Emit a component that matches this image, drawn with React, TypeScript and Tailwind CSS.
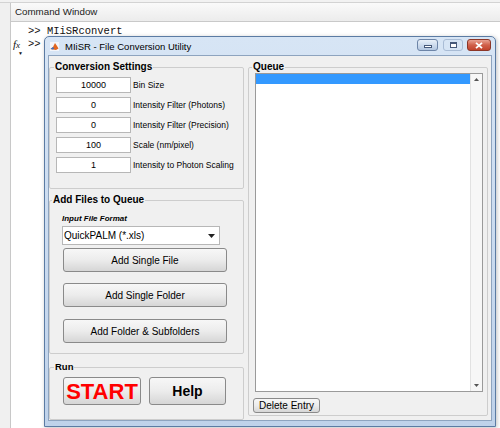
import React from 'react';

const settings = [
  { value: '10000', label: 'Bin Size' },
  { value: '0', label: 'Intensity Filter (Photons)' },
  { value: '0', label: 'Intensity Filter (Precision)' },
  { value: '100', label: 'Scale (nm/pixel)' },
  { value: '1', label: 'Intensity to Photon Scaling' },
];

const EditRow = ({ value, label }: { value: string; label: string }) => (
  <div className="flex items-center h-[16px]">
    <div className="w-[75px] h-[16px] bg-white border border-[#b7b7b7] flex items-center justify-center text-[9px] leading-none">
      {value}
    </div>
    <span className="ml-[2px] text-[8.5px] leading-none">{label}</span>
  </div>
);

const WinButton = ({ children, className = '' }: { children: React.ReactNode; className?: string }) => (
  <div
    className={`flex items-center justify-center border border-[#8a8a8a] rounded-[3px] bg-linear-to-b from-[#f7f7f7] via-[#ececec] to-[#d6d6d6] ${className}`}
  >
    {children}
  </div>
);

const MatlabIcon = () => (
  <svg width="9" height="9" viewBox="0 0 9 9">
    <rect width="9" height="9" fill="#f3f5fa" />
    <path d="M0.5 7 L3 5 L5 1 L7 4 L8.5 6.5 L6 8 L3 7.6 Z" fill="#e2661f" />
    <path d="M0.5 7 L3 5 L4.3 6.6 L3 7.6 Z" fill="#3b6fc2" />
  </svg>
);

const Dialog = () => (
  <div className="absolute left-[44px] top-[36px] w-[452px] h-[391px] flex flex-col rounded-t-[5px] border border-[#5b7ba3] bg-linear-to-b from-[#d7e5f5] to-[#bfd2ea] px-[3px] pb-[5px] shadow-[1px_1px_4px_rgba(0,0,0,0.25)]">
    {/* title bar */}
    <div className="h-[18px] flex items-start pl-[2px] pr-[1px]">
      <div className="mt-[5px]">
        <MatlabIcon />
      </div>
      <span className="ml-[6px] mt-[4px] text-[9.5px] leading-[11px] text-black">MIiSR - File Conversion Utility</span>
      <div className="ml-auto flex items-start mt-[2px]">
        <div className="w-[21px] h-[12px] rounded-[3px] border border-[#6d85a8] bg-linear-to-b from-[#e8f0f9] to-[#b3c7e1] flex items-end justify-center pb-[2px]">
          <div className="w-[8px] h-[3px] bg-white border border-[#46597a]" />
        </div>
        <div className="ml-[5px] w-[20px] h-[12px] rounded-[3px] border border-[#a9bcd5] flex items-center justify-center">
          <div className="w-[7px] h-[6px] bg-white border border-[#46597a] border-t-2" />
        </div>
        <div className="ml-[4px] w-[24px] h-[12px] rounded-[3px] border border-[#8c3627] bg-linear-to-b from-[#e7a192] via-[#d0604a] to-[#c1432c] flex items-center justify-center">
          <svg width="8" height="7" viewBox="0 0 8 7">
            <path d="M1 0.8 L7 6.2 M7 0.8 L1 6.2" stroke="#ffffff" strokeWidth="1.8" />
          </svg>
        </div>
      </div>
    </div>

    {/* client area */}
    <div className="flex-1 flex bg-[#f0f0f0] border border-[#8ea4bf] pt-[5px] pr-[3px] gap-[4px] font-['Liberation_Sans',Arial,sans-serif]">
      {/* left column */}
      <div className="w-[195px] flex flex-col">
        <fieldset className="h-[128px] border border-[#cdcdcd] rounded-[2px] pl-[6px] flex flex-col">
          <legend className="-ml-[2px] px-[1px] text-[10px] leading-[12px] font-bold">Conversion Settings</legend>
          <div className="flex flex-col gap-[4px] pt-[4px]">
            {settings.map((s) => (
              <EditRow key={s.label} value={s.value} label={s.label} />
            ))}
          </div>
        </fieldset>

        <fieldset className="mt-[5px] h-[160px] border border-[#cdcdcd] rounded-[2px] pl-[12px]">
          <legend className="-ml-[10px] px-[1px] text-[10px] leading-[12px] font-bold">Add Files to Queue</legend>
          <div className="pt-[8px] flex flex-col">
            <span className="h-[10px] text-[8px] leading-[10px] font-bold italic">Input File Format</span>
            <div className="mt-[2px] w-[158px] h-[19px] bg-white border border-[#b7b7b7] flex items-center pl-[1px] pr-[4px] text-[10px]">
              <span>QuickPALM (*.xls)</span>
              <svg className="ml-auto" width="7" height="4" viewBox="0 0 7 4">
                <path d="M0 0 L7 0 L3.5 4 Z" fill="#222" />
              </svg>
            </div>
            <WinButton className="mt-[3px] ml-[1px] w-[164px] h-[24px] text-[10px]">Add Single File</WinButton>
            <WinButton className="mt-[11px] ml-[1px] w-[164px] h-[24px] text-[10px]">Add Single Folder</WinButton>
            <WinButton className="mt-[12px] ml-[1px] w-[164px] h-[24px] text-[10px]">Add Folder &amp; Subfolders</WinButton>
          </div>
        </fieldset>

        <fieldset className="mt-[7px] h-[59px] border border-[#cdcdcd] rounded-[2px] pl-[13px]">
          <legend className="-ml-[9px] px-[1px] text-[9.5px] leading-[12px] font-bold">Run</legend>
          <div className="mt-[4px] flex gap-[8px]">
            <WinButton className="w-[78px] h-[28px] text-[22px] font-bold text-[#ff0000]">START</WinButton>
            <WinButton className="w-[77px] h-[28px] text-[14px] font-bold">Help</WinButton>
          </div>
        </fieldset>
      </div>

      {/* queue */}
      <fieldset className="w-[240px] h-[355px] border border-[#cdcdcd] rounded-[2px] pl-[6px] pr-[4px] flex flex-col">
        <legend className="-ml-[3px] px-[1px] text-[10px] leading-[12px] font-bold">Queue</legend>
        <div className="h-[319px] bg-white border border-[#9a9a9a] flex">
          <div className="flex-1 pt-[0px]">
            <div className="h-[10px] bg-[#3399ff]" />
          </div>
          <div className="w-[12px] bg-[#f7f7f7] border-l border-[#e2e2e2] flex flex-col items-center justify-between py-[4px]">
            <svg width="5" height="3" viewBox="0 0 5 3">
              <path d="M0 3 L5 3 L2.5 0 Z" fill="#555" />
            </svg>
            <svg width="5" height="3" viewBox="0 0 5 3">
              <path d="M0 0 L5 0 L2.5 3 Z" fill="#555" />
            </svg>
          </div>
        </div>
        <WinButton className="mt-[6px] -ml-[2px] w-[67px] h-[15px] text-[10px] rounded-[2px]">Delete Entry</WinButton>
      </fieldset>
    </div>
  </div>
);

export default function App() {
  return (
    <div className="relative w-[500px] h-[428px] overflow-hidden bg-white font-['Liberation_Sans',Arial,sans-serif]">
      <div className="h-[3px] bg-[#f2f2f2] border-b border-[#d3d3d3]" />
      <div className="flex h-[425px]">
        <div className="w-[11px] bg-[#f0f0f0] border-r border-[#c8c8c8]" />
        <div className="flex-1 flex flex-col">
          <div className="h-[19px] flex items-center pl-[4px] bg-linear-to-b from-[#fafafa] to-[#ececec] border-b border-[#c9c9c9] text-[9.75px] text-[#222]">
            Command Window
          </div>
          <div className="pt-[3px] font-['Liberation_Mono','Courier_New',monospace] text-[10.5px] leading-[13px] text-[#111]">
            <div className="pl-[17px]">&gt;&gt; MIiSRconvert</div>
            <div className="flex items-center pl-[2px]">
              <span className="w-[15px] font-['Liberation_Serif',serif] italic text-[11px] leading-[11px] relative">
                f<span className="text-[9px]">x</span>
                <span className="absolute left-[5px] top-[9px] text-[5px] not-italic">▼</span>
              </span>
              <span>&gt;&gt;</span>
            </div>
          </div>
        </div>
      </div>
      <Dialog />
    </div>
  );
}
